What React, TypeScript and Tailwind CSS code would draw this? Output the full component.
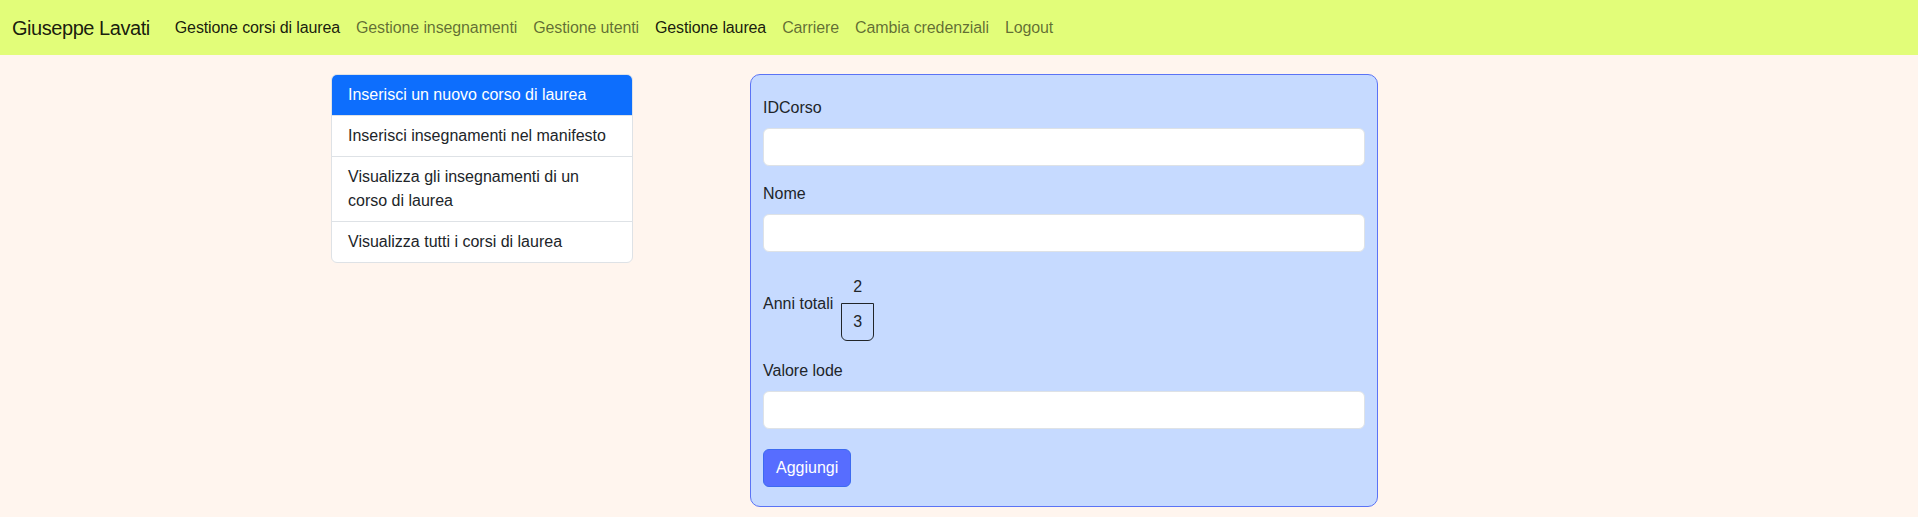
import React from "react";

type NavLink = {
  label: string;
  active?: boolean;
};

const navLinks: NavLink[] = [
  { label: "Gestione corsi di laurea", active: true },
  { label: "Gestione insegnamenti" },
  { label: "Gestione utenti" },
  { label: "Gestione laurea", active: true },
  { label: "Carriere" },
  { label: "Cambia credenziali" },
  { label: "Logout" }
];

const menuItems = [
  "Inserisci un nuovo corso di laurea",
  "Inserisci insegnamenti nel manifesto",
  "Visualizza gli insegnamenti di un corso di laurea",
  "Visualizza tutti i corsi di laurea"
];

function TextField({ label, className }: { label: string; className?: string }) {
  return (
    <div className={className}>
      <label className="mb-2 block leading-6 text-[#212529]">{label}</label>
      <input
        type="text"
        className="block h-[38px] w-full rounded-[6px] border border-[#dee2e6] bg-white px-3 text-[#212529] outline-none"
      />
    </div>
  );
}

export default function App() {
  return (
    <div className="min-h-[517px] bg-[#fff5ee] font-['Liberation_Sans',Arial,sans-serif] text-base text-[#212529]">
      <nav className="flex h-[55px] items-center bg-[#e2fd79] px-3">
        <span className="mr-[17px] text-[20px] leading-[30px] tracking-[-0.45px] text-black/90">Giuseppe Lavati</span>
        <ul className="flex items-center">
          {navLinks.map((link) => (
            <li key={link.label}>
              <a
                className={
                  link.active
                    ? "px-2 leading-6 tracking-[-0.12px] text-[rgba(0,0,0,0.9)]"
                    : "px-2 leading-6 tracking-[-0.12px] text-[rgba(0,0,0,0.58)]"
                }
              >
                {link.label}
              </a>
            </li>
          ))}
        </ul>
      </nav>

      <div className="flex items-start pl-[331px] pt-[19px]">
        <ul className="w-[302px] overflow-hidden rounded-[6px] border border-[#dee2e6] bg-white">
          {menuItems.map((item, index) => (
            <li
              key={item}
              className={
                index === 0
                  ? "bg-[#0d6efd] px-4 py-2 leading-6 text-white"
                  : "border-t border-[#dee2e6] px-4 py-2 leading-6 text-[#212529]"
              }
            >
              {item}
            </li>
          ))}
        </ul>

        <form className="ml-[117px] w-[628px] rounded-[10px] border border-[#5b73f5] bg-[#c6daff] px-3 pb-[19px] pt-[21px]">
          <TextField label="IDCorso" />
          <TextField label="Nome" className="mt-4" />

          <div className="mt-[23px] flex items-start">
            <label className="mt-[17px] leading-6">Anni totali</label>
            <div className="ml-2 flex w-[33px] flex-col items-center">
              <span className="leading-6">2</span>
              <div className="mt-1 flex h-[38px] w-[33px] items-center justify-center rounded-b-[6px] border border-[#212529] leading-6">
                3
              </div>
            </div>
          </div>

          <TextField label="Valore lode" className="mt-[18px]" />

          <button
            type="button"
            className="mt-5 h-[38px] rounded-[6px] border border-[#3d6af0] bg-[#576dff] px-3 leading-6 text-white"
          >
            Aggiungi
          </button>
        </form>
      </div>
    </div>
  );
}
